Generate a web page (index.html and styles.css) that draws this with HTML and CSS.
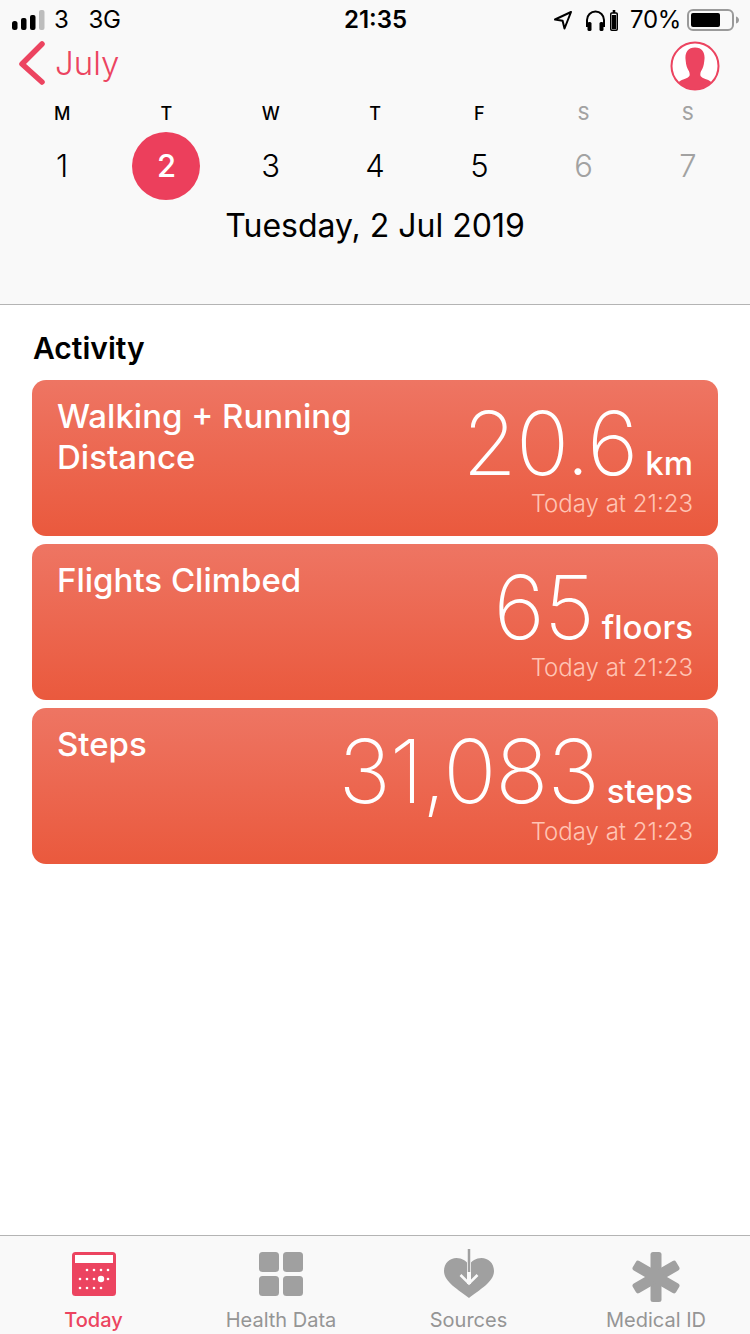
FILE: index.html
```html
<!DOCTYPE html>
<html lang="en">
<head>
<meta charset="utf-8">
<title>Health</title>
<link rel="stylesheet" href="styles.css">
</head>
<body>
<div class="app">
  <header class="header">
    <div class="status">
      <div class="status-side">
        <svg class="signal" width="34" height="20" viewBox="0 0 34 20"><rect x="0" y="11" width="5.5" height="9" rx="2.5" fill="#000"/><rect x="9" y="8" width="5.5" height="12" rx="2" fill="#000"/><rect x="18" y="5" width="5.5" height="15" rx="2" fill="#000"/><rect x="27" y="0" width="5.5" height="20" rx="2" fill="#bdbdbd"/></svg>
        <span class="carrier">3</span>
        <span class="carrier net">3G</span>
      </div>
      <div class="clock">21:35</div>
      <div class="status-side right">
        <svg width="20" height="20" viewBox="0 0 20 20"><path d="M18 2 2 9.5l7.6 1.2L11.5 18.5z" fill="none" stroke="#000" stroke-width="2" stroke-linejoin="round"/></svg>
        <svg class="phones" width="21" height="22" viewBox="0 0 21 22"><path d="M2 18V11a8.5 8.5 0 0 1 17 0v7" fill="none" stroke="#000" stroke-width="2"/><rect x="2.5" y="13" width="4" height="9" rx="1.5" fill="#000"/><rect x="14.500" y="13" width="4" height="9" rx="1.500" fill="#000"/></svg>
        <svg class="case" width="8" height="21" viewBox="0 0 8 21"><rect x="2.700" y="0" width="2.600" height="3" fill="#000"/><rect x="0.750" y="3" width="6.500" height="17.200" rx="1" fill="none" stroke="#000" stroke-width="1.500"/><rect x="2" y="5" width="4" height="14" fill="#000"/></svg>
        <span class="carrier pct">70%</span>
        <svg width="52" height="22" viewBox="0 0 52 22"><rect x="1" y="1" width="45" height="20" rx="5" fill="none" stroke="#9a9a9a" stroke-width="2"/><rect x="4" y="4" width="29" height="14" rx="2" fill="#000"/><path d="M49 7.500c2 .5 3 2 3 3.500s-1 3-3 3.500z" fill="#9a9a9a"/></svg>
      </div>
    </div>
    <div class="nav">
      <a class="back">
        <svg width="27" height="44" viewBox="0 0 27 44"><path d="M24 3 4 23l20 18" fill="none" stroke="#ec4460" stroke-width="5.500" stroke-linecap="round" stroke-linejoin="round"/></svg>
        <span>July</span>
      </a>
      <svg class="avatar" width="50" height="50" viewBox="0 0 50 50"><defs><clipPath id="disc"><circle cx="25" cy="25" r="23.500"/></clipPath></defs><circle cx="25" cy="25" r="23.500" fill="#fff" stroke="#ec4460" stroke-width="2"/><path clip-path="url(#disc)" d="M25 6.500c-7.500 0-10 5.500-9.500 11.500.3 3.500.8 7 2 9.500 1 2 2.200 3.500 2.200 6 0 2.500-2.700 3.800-6.500 5C9 39.800 6.500 42 6 50h38c-.5-8-3-10.200-7.200-11.500-3.800-1.200-6.500-2.500-6.500-5 0-2.500 1.200-4 2.200-6 1.200-2.500 1.700-6 2-9.500.5-6-2-11.500-9.500-11.500z" fill="#ec4460"/></svg>
    </div>
    <div class="week">
      <div class="day"><span class="dow">M</span><span class="num">1</span></div>
      <div class="day"><span class="dow">T</span><span class="num selected">2</span></div>
      <div class="day"><span class="dow">W</span><span class="num">3</span></div>
      <div class="day"><span class="dow">T</span><span class="num">4</span></div>
      <div class="day"><span class="dow">F</span><span class="num">5</span></div>
      <div class="day off"><span class="dow">S</span><span class="num">6</span></div>
      <div class="day off"><span class="dow">S</span><span class="num">7</span></div>
    </div>
    <div class="date">Tuesday, 2 Jul 2019</div>
  </header>

  <main class="main">
    <h2 class="section">Activity</h2>
    <article class="card">
      <h3 class="card-title">Walking + Running<br>Distance</h3>
      <div class="card-data">
        <div class="reading"><span class="value">20.6</span><span class="unit">km</span></div>
        <div class="when">Today at 21:23</div>
      </div>
    </article>
    <article class="card">
      <h3 class="card-title">Flights Climbed</h3>
      <div class="card-data">
        <div class="reading"><span class="value">65</span><span class="unit">floors</span></div>
        <div class="when">Today at 21:23</div>
      </div>
    </article>
    <article class="card">
      <h3 class="card-title">Steps</h3>
      <div class="card-data">
        <div class="reading"><span class="value">31,083</span><span class="unit">steps</span></div>
        <div class="when">Today at 21:23</div>
      </div>
    </article>
  </main>

  <nav class="tabs">
    <a class="tab active">
      <svg width="44" height="44" viewBox="0 0 44 44"><rect width="44" height="44" rx="3.500" fill="#ec4460"/><rect x="3" y="3" width="38" height="8" fill="#fff"/><g fill="#fff"><circle cx="15" cy="18" r="1.300"/><circle cx="22" cy="18" r="1.300"/><circle cx="29" cy="18" r="1.300"/><circle cx="36" cy="18" r="1.300"/><circle cx="8" cy="27" r="1.300"/><circle cx="15" cy="27" r="1.300"/><circle cx="22" cy="27" r="1.300"/><circle cx="29" cy="27" r="3.200"/><circle cx="36" cy="27" r="1.300"/><circle cx="8" cy="36" r="1.300"/><circle cx="15" cy="36" r="1.300"/><circle cx="22" cy="36" r="1.300"/><circle cx="29" cy="36" r="1.300"/></g></svg>
      <span>Today</span>
    </a>
    <a class="tab">
      <svg width="44" height="44" viewBox="0 0 44 44"><g fill="#a0a0a0"><rect width="20" height="20" rx="3.500"/><rect x="24" width="20" height="20" rx="3.500"/><rect y="24" width="20" height="20" rx="3.500"/><rect x="24" y="24" width="20" height="20" rx="3.500"/></g></svg>
      <span>Health Data</span>
    </a>
    <a class="tab">
      <svg width="52" height="52" viewBox="0 0 52 52" class="sources"><path d="M26 50C16 42 1 34 1 23 1 15 7 10 13.500 10c5.500 0 10 3 12.500 7 2.500-4 7-7 12.500-7C45 10 51 15 51 23c0 11-15 19-25 27z" fill="#a0a0a0"/><path d="M26 14v22" stroke="#fafafa" stroke-width="4"/><path d="M26 1v23" stroke="#a0a0a0" stroke-width="2.500"/><path d="M17.500 27 26 35.500 34.500 27" fill="none" stroke="#fafafa" stroke-width="2.600"/></svg>
      <span>Sources</span>
    </a>
    <a class="tab">
      <svg width="48" height="50" viewBox="0 0 48 50"><g fill="#a0a0a0"><rect x="18.500" y="0" width="11" height="50" rx="2.500"/><rect x="18.500" y="0" width="11" height="50" rx="2.500" transform="rotate(60 24 25)"/><rect x="18.500" y="0" width="11" height="50" rx="2.500" transform="rotate(-60 24 25)"/></g></svg>
      <span>Medical ID</span>
    </a>
  </nav>
</div>
</body>
</html>
```
FILE: styles.css
```css
* { box-sizing: border-box; }
html, body { margin: 0; padding: 0; }
body {
  background: #fff;
  color: #000;
  font-family: Inter, "Liberation Sans", sans-serif;
}
.app {
  width: 750px;
  height: 1334px;
  display: flex;
  flex-direction: column;
  overflow: hidden;
}
.header {
  height: 305px;
  background: #f9f9f9;
  border-bottom: 1px solid #b4b4b4;
  display: flex;
  flex-direction: column;
}
.status {
  height: 40px;
  padding: 0 11px 0 12px;
  display: grid;
  grid-template-columns: 1fr auto 1fr;
  align-items: center;
}
.status-side {
  display: flex;
  align-items: center;
}
.status-side.right {
  justify-content: flex-end;
}
.signal { margin-right: 8px; }
.carrier { font-size: 24px; line-height: 30px; letter-spacing: -0.3px; }
.net { margin-left: 20px; }
.clock { font-size: 24px; font-weight: 600; line-height: 30px; }
.phones { margin-left: 12px; }
.case { margin-left: 4px; }
.pct { margin: 0 6px 0 12px; }
.nav {
  height: 44px;
  padding: 0 30px 0 18px;
  margin-top: 1px;
  display: flex;
  align-items: center;
  justify-content: space-between;
}
.back {
  display: flex;
  align-items: center;
  gap: 10px;
  color: #ec4460;
  font-size: 33px;
  font-weight: 300;
}
.avatar { margin-top: 5px; }
.week {
  margin-top: 14px;
  padding: 0 10px;
  display: grid;
  grid-template-columns: repeat(7, 104.300px);
}
.day {
  display: flex;
  flex-direction: column;
  align-items: center;
}
.dow {
  height: 30px;
  font-size: 18px;
  font-weight: 500;
  line-height: 30px;
}
.num {
  width: 68px;
  height: 68px;
  margin-top: 3px;
  border-radius: 50%;
  font-size: 31px;
  font-weight: 300;
  line-height: 68px;
  text-align: center;
}
.selected {
  background: #ec3f5c;
  color: #fff;
  font-weight: 500;
}
.off { color: #a2a2a2; }
.date {
  margin-top: 6px;
  font-size: 32px;
  line-height: 40px;
  text-align: center;
  font-weight: 400;
}
.main {
  flex: 1;
  padding: 0 32px;
  display: flex;
  flex-direction: column;
  gap: 8px;
}
.section {
  margin: 25px 0 6px;
  font-size: 30px;
  font-weight: 600;
  line-height: 36px;
  padding-left: 1px;
}
.card {
  height: 156px;
  padding: 16px 25px 17px;
  border-radius: 14px;
  background: linear-gradient(#ee7563, #ea593d);
  color: #fff;
  display: flex;
  justify-content: space-between;
}
.card-title {
  margin: 0;
  font-size: 33px;
  font-weight: 500;
  line-height: 41px;
}
.card-data {
  display: flex;
  flex-direction: column;
  align-items: flex-end;
  justify-content: flex-end;
}
.reading {
  display: flex;
  align-items: baseline;
  gap: 8px;
}
.value {
  font-size: 88px;
  font-weight: 200;
  line-height: 90px;
  letter-spacing: -1px;
}
.unit {
  font-size: 33px;
  font-weight: 500;
}
.when {
  margin-top: 1px;
  font-size: 24px;
  line-height: 30px;
  color: #ffc4b4;
  font-weight: 300;
}
.tabs {
  height: 99px;
  background: #f9f9f9;
  border-top: 1px solid #b4b4b4;
  display: grid;
  grid-template-columns: 187px 188px 187px 188px;
}
.tab {
  position: relative;
  display: flex;
  flex-direction: column;
  align-items: center;
  color: #959595;
  font-size: 20px;
  font-weight: 400;
  padding-top: 16px;
}
.tab span {
  position: absolute;
  top: 71px;
  line-height: 26px;
  white-space: nowrap;
}
.active { color: #ec4460; font-weight: 500; }
.sources { margin-top: -4px; }
```
